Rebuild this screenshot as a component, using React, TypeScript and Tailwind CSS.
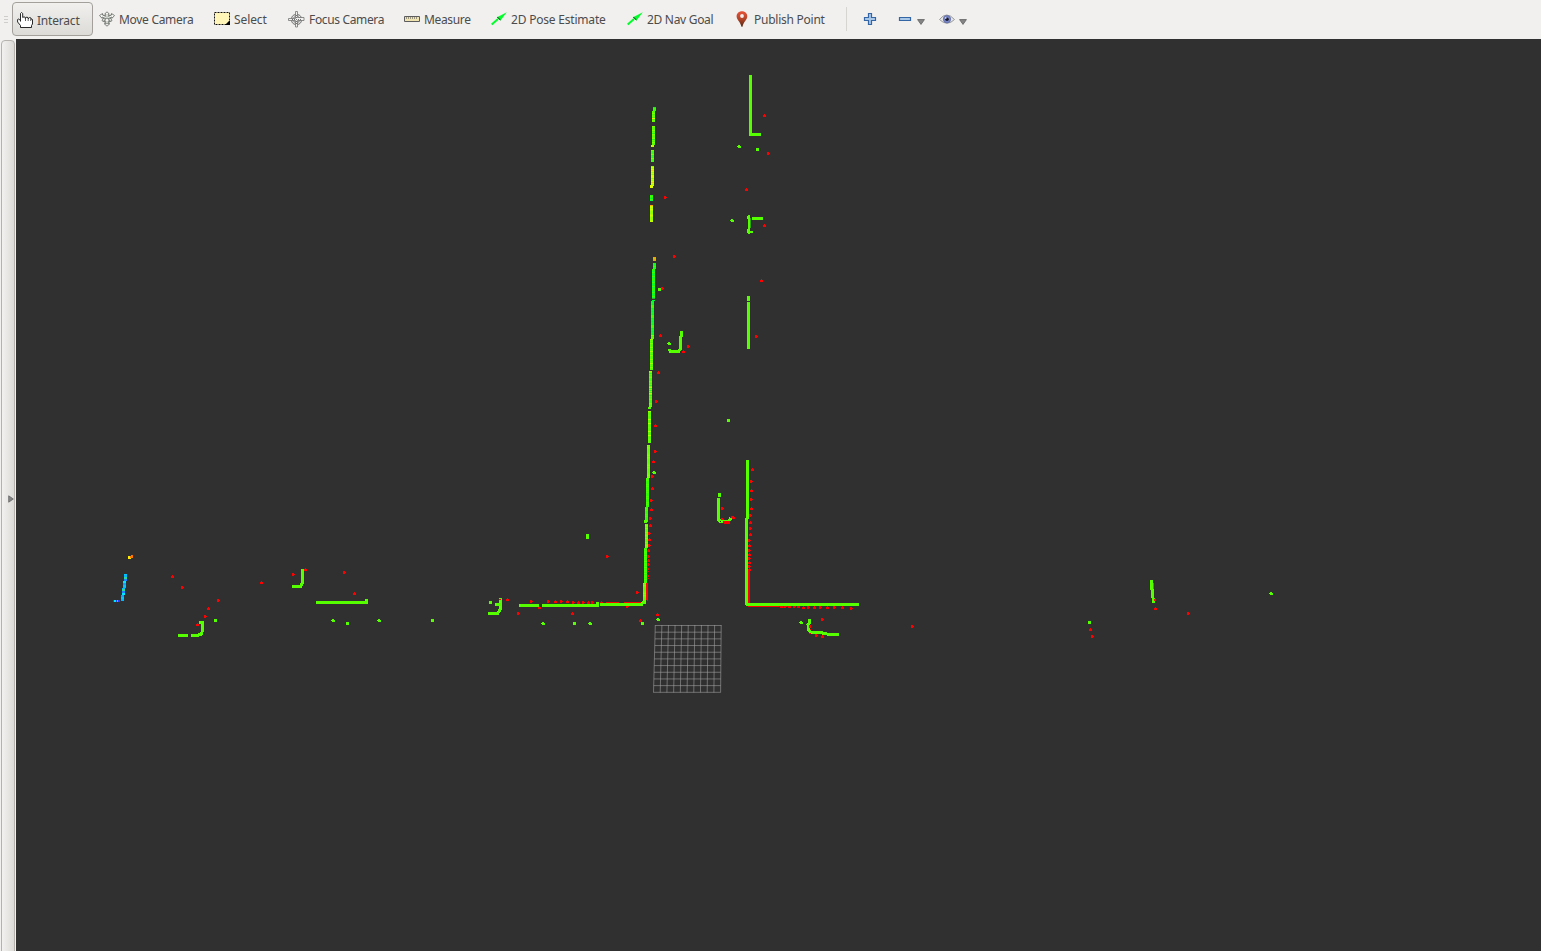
import React from "react";

type Pt = [number, number];

const GREEN = "#55ff00";
const RED = "#ff0000";

const redDots: Pt[] = [
  [764, 115], [768, 153], [746, 189], [665, 197], [764, 225], [674, 256], [761, 280], [662, 288],
  [660, 335], [688, 346], [683, 351], [756, 336], [658, 372], [656, 401], [655, 425], [655, 451],
  [653, 461], [652, 476], [652, 488], [651, 500], [651, 509], [650, 518], [650, 525], [649, 533],
  [649, 539], [649, 545], [648, 550], [648, 556], [648, 560], [648, 564], [647, 568], [647, 571],
  [647, 575], [647, 578], [752, 469], [751, 481], [751, 490], [751, 499], [751, 508], [750, 515],
  [750, 522], [750, 528], [750, 534], [749, 540], [749, 545], [749, 550], [749, 554], [749, 558],
  [749, 562], [749, 566], [749, 569], [637, 592], [657, 614], [722, 508], [733, 517],
  [722, 519], [172, 576], [182, 587], [261, 582], [218, 600], [208, 608], [205, 616], [197, 624],
  [293, 574], [305, 569], [344, 572], [354, 593], [607, 556], [507, 599], [531, 601], [539, 607],
  [518, 613], [572, 613], [548, 601], [555, 601], [561, 601], [567, 601], [573, 602], [578, 602],
  [583, 602], [588, 602], [592, 602], [601, 602], [627, 606], [803, 607], [808, 607], [814, 607],
  [820, 607], [827, 607], [834, 607], [842, 607], [851, 608], [798, 606], [794, 606], [789, 606],
  [785, 606], [781, 606], [822, 619], [809, 626], [816, 635], [822, 636], [912, 626],
  [1155, 608], [1188, 613], [1090, 629], [1092, 636], [640, 620],
];

const greenDots: Pt[] = [
  [739, 146], [757, 149], [732, 220], [659, 289], [669, 343], [728, 420], [654, 472], [642, 623],
  [658, 619], [215, 620], [333, 620], [347, 623], [379, 620], [432, 620], [543, 623], [574, 623],
  [590, 623], [490, 602], [801, 622], [1089, 622], [1271, 593],
];

const greenPaths = [
  "M750.5 75V134.5H761", "M752 218.5H763",
  "M748.5 296V300.5", "M748.5 302V349", "M681.5 331V335L680.5 338V349L678.5 351.5H670.5L669 349",
  "M719.5 493V497", "M719 498L718 512V519L720.5 521.5H728L731 518",
  "M747.5 460V518.5", "M746.5 518V605M746 604.5H859",
  "M302.5 569V583L300.5 586.5H292", "M316 602.5H366.5V599",
  "M178 635.5H188", "M191 635.5H197L201.5 634L202.5 630V622.5L199 622",
  "M500.5 598V609L497.5 613.5H488", "M495 604H502",
  "M519 605.5H539", "M541.5 605.5H598.5M597.5 602V605M600 604.5H641.5L643 602H646",
  "M587 534V539", "M1151.5 580V586L1152.5 593L1153.5 603",
  "M809.5 619V623L808 625V630L811 632L820 632.5L827 634H839",
];

interface Wall { y0: number; y1: number; x0: number; x1: number; tone: string[] }

const mix = ["#70ff00", "#58ff00", "#80ff00", "#48ff00", "#a0ff00", "#66ff00"];
const cool = ["#00ff20", "#18ff08", "#28ff00", "#00ff38", "#40ff00"];
const hot = ["#c8ff00", "#e0d800", "#a0ff00", "#ffa000", "#d8ff00", "#90ff00"];
const lime = ["#66ff00", "#70ff00", "#5cff00", "#80ff00", "#60ff00"];

const walls: Wall[] = [
  { y0: 107, y1: 111, x0: 653, x1: 653, tone: ["#22e818", "#30ff00"] },
  { y0: 111, y1: 122, x0: 652, x1: 652, tone: mix.concat("#e0f000") },
  { y0: 126, y1: 145, x0: 652.4, x1: 652, tone: mix.concat("#d8f000", "#20ff10") },
  { y0: 145, y1: 147, x0: 651, x1: 651, tone: ["#bbff00"] },
  { y0: 150, y1: 162, x0: 651, x1: 651, tone: ["#78ff00", "#20ff20", "#90ff00", "#38ff10"] },
  { y0: 166, y1: 186, x0: 651, x1: 651, tone: hot },
  { y0: 185, y1: 188, x0: 650, x1: 650, tone: ["#ddff00"] },
  { y0: 195, y1: 201, x0: 650, x1: 650, tone: cool },
  { y0: 205, y1: 208, x0: 650, x1: 650, tone: ["#ffaa00", "#c8ff00"] },
  { y0: 208, y1: 222, x0: 650, x1: 650, tone: ["#b0ff00", "#c8ff00", "#98ff00"] },
  { y0: 257, y1: 261, x0: 653, x1: 653, tone: ["#d0b010", "#ff9900", "#b0d000"] },
  { y0: 263, y1: 298, x0: 652.6, x1: 652, tone: cool },
  { y0: 298, y1: 299, x0: 652, x1: 652, tone: ["#38b018"] },
  { y0: 300, y1: 335, x0: 651.5, x1: 651, tone: cool },
  { y0: 335, y1: 370, x0: 650.6, x1: 649.5, tone: mix },
  { y0: 371, y1: 407, x0: 649.4, x1: 648.6, tone: mix.concat(cool) },
  { y0: 407, y1: 409, x0: 648, x1: 648, tone: ["#55ff00"] },
  { y0: 411, y1: 443, x0: 648, x1: 648, tone: lime.concat("#b0ff00") },
  { y0: 445, y1: 478, x0: 647.4, x1: 647, tone: lime },
  { y0: 478, y1: 522, x0: 646.4, x1: 645, tone: ["#30ff00", "#48ff00", "#38ff00"] },
  { y0: 520, y1: 523, x0: 644, x1: 644, tone: ["#55ff00"] },
  { y0: 524, y1: 548, x0: 645, x1: 644.5, tone: lime },
  { y0: 548, y1: 583, x0: 644.4, x1: 643.6, tone: ["#40ff00", "#30ff00", "#50ff00"] },
  { y0: 583, y1: 602, x0: 643.4, x1: 643, tone: lime },
];

const wallCells = walls.flatMap((w, k) =>
  Array.from({ length: w.y1 - w.y0 }, (_, i) => {
    const x = Math.round(w.x0 + ((w.x1 - w.x0) * i) / (w.y1 - w.y0));
    return { x, y: w.y0 + i, c: w.tone[(i * 7 + ((i * i) >> 2) + k) % w.tone.length] };
  })
);

const blues = ["#00c8ff", "#10a0ff", "#00eaff", "#2080ff", "#30d8a0", "#00b4ff"];
const gridSteps = Array.from({ length: 11 }, (_, i) => i);

function LaserScan() {
  return (
    <svg className="block h-full w-full" viewBox="16 39 1525 912" preserveAspectRatio="xMinYMin slice">
      <g stroke="#a0a0a0" strokeOpacity="0.58" strokeWidth="1">
        {gridSteps.map((i) => (
          <g key={i}>
            <line x1={655.3 + i * 6.59} y1="625" x2={653.5 + i * 6.71} y2="692.5" />
            <line x1={655.3 - i * 0.18} y1={625.5 + i * 6.68} x2={721.3 - i * 0.07} y2={625.5 + i * 6.68} />
          </g>
        ))}
      </g>
      <g shapeRendering="crispEdges">
        <path d="M749 606H779M749 570V605M646.5 583V600M724 522.5H730M606 603H619M624 603H641M809.5 629V634" fill="none" stroke={RED} strokeWidth="2" />
        {redDots.map(([x, y], i) => (
          <path key={i} fill={RED} d={i % 2 ? `M${x - 1} ${y - 1}h2v1h1v1h-1v1h-2z` : `M${x} ${y - 1}h1v1h1v2h-3v-2h1z`} />
        ))}
        <path d={greenPaths.join("")} fill="none" stroke={GREEN} strokeWidth="3" />
        <path fill={GREEN} d="M748 215h2v16h3v2h-3v1h-2v-1h-1v-4h1v-10h-1v-3h1z" />
        <path d="M750.5 218V228M1153.5 583V589" fill="none" stroke="#2fa814" strokeWidth="1" />
        {wallCells.map((c, i) => (
          <rect key={i} x={c.x} y={c.y} width="3" height="1" fill={c.c} />
        ))}
        {greenDots.map(([x, y], i) => (
          <path key={i} fill={GREEN} d={i % 2 ? `M${x - 1} ${y - 1}h3v3h-3z` : `M${x - 1} ${y - 1}h2v1h1v2h-3v-1h-1v-1h1z`} />
        ))}
        <path d="M723 521h7v2h-7zM731 516h2v2h-2zM1154 599h2v2h-2zM809 625h2v3h-2zM499 599h2v1h-2zM606 602h12v1h-12zM624 602h16v1h-16z" fill={RED} />
        <path d="M647 583h1v18h-1zM748 570h2v33h-2zM748 606h30v1h-30z" fill={RED} />
        {Array.from({ length: 27 }, (_, i) => (
          <rect key={i} x={Math.round(124.4 - i * 0.14)} y={574 + i} width="3" height="1" fill={blues[(i * 5 + (i >> 1)) % 6]} />
        ))}
        <path fill="#2040ff" d="M113 600h7v2h-7z" />
        <path fill="#00eaff" d="M114 600h2v2h-2zM117 600h1v2h-1z" />
        <path fill="#ffee00" d="M128 556h3v3h-3z" />
        <path fill="#ff7800" d="M130 556h1v-1h2v3h-3z" />
      </g>
    </svg>
  );
}

const HandIcon = () => (
  <svg className="h-4 w-4" viewBox="0 0 16 16">
    <path d="M3.5 9.5V1.5L4.5.5L5.7 1.5V5.5L7 4.8L8.4 5.5V6.5L9.6 5L11.2 5.7V6.8L12.5 5.6L14 6V7L15.5 7.5V12L14.5 13.5V15.5H3.5V13.5L.6 10V7.5L1.8 7L3.5 8.7" fill="#fff" stroke="#111" strokeWidth=".9" strokeLinejoin="round" />
    <path d="M8.5 6v3M11.2 6.5v2.5M13.7 7v2" stroke="#333" strokeWidth=".8" fill="none" />
  </svg>
);

const MoveIcon = () => (
  <svg className="h-4 w-4" viewBox="0 0 16 16" fill="none" stroke="#70756f" strokeWidth="1">
    <path d="M8 .8L10.3 3H9.2V4.7Q11.2 4.7 12.5 4V2.5L15.5 4.5L13 7.3V6Q11 7.2 9.4 7.3V8.5L11.4 7.5V6.7L13 9.8L10 10.5L10.6 9.3L9.2 10V12.7H10.8L8 15.2L5.2 12.7H6.8V10L5.4 9.3L6 10.5L3 9.8L4.6 6.7V7.5L6.6 8.5V7.3Q5 7.2 3 6V7.3L.5 4.5L3.5 2.5V4Q4.8 4.7 6.8 4.7V3H5.7Z" fill="#f6f6f4" strokeWidth=".9" />
    <path d="M3.5 3.5L7 6H9L12.5 3.5M4 10L8 13L12 10M6.5 7.5h3" strokeWidth=".7" />
  </svg>
);

const SelectIcon = () => (
  <svg className="h-4 w-4" viewBox="0 0 16 16">
    <path d="M.5 1.5h15v12H.5z" fill="#fff5b8" stroke="#111" strokeDasharray="2 1" />
    <path d="M16 10v4h-4v-1l3-3z" fill="#000" />
  </svg>
);

const FocusIcon = () => (
  <svg className="h-[17px] w-[17px]" viewBox="0 0 17 17" fill="none" stroke="#747474" strokeWidth="1">
    <circle cx="8.5" cy="8.5" r="5.3" />
    <circle cx="8.5" cy="8.5" r="3" strokeWidth=".8" />
    <path d="M7.5.5h2v6h6.5v3H9.5V16h-2V9.5H.5v-2h7z" fill="#f1f0ee" strokeWidth=".8" />
    <path d="M4 8.5h9M8.5 4v9" strokeDasharray="1 1" />
    <circle cx="8.5" cy="8.5" r="4" strokeDasharray="1 1" />
  </svg>
);

const RulerIcon = () => (
  <svg className="h-4 w-4" viewBox="0 0 16 16">
    <path d="M.5 5.5h15v5H.5z" fill="#efe3b0" stroke="#5c5c5c" />
    <path d="M2.5 6v2M4.5 6v2M6.5 6v2M8.5 6v2M10.5 6v2M12.5 6v2" stroke="#9b947c" />
  </svg>
);

const ArrowIcon = () => (
  <svg className="h-4 w-4" viewBox="0 0 16 16">
    <path d="M.7 13.5L7 8" stroke="#00ff2a" strokeWidth="2" />
    <path d="M6 6.2L15.8 1.2L9.5 9.4Z" fill="#00ff2a" />
    <path d="M6 6.2L9.3 9.2L8 7Z" fill="#146b20" stroke="#146b20" strokeWidth=".6" />
  </svg>
);

const PinIcon = () => (
  <svg className="h-4 w-3" viewBox="0 0 12 16">
    <defs>
      <linearGradient id="pin" x2="0" y2="1">
        <stop stopColor="#e65339" /><stop offset=".5" stopColor="#b34429" /><stop offset="1" stopColor="#502713" />
      </linearGradient>
    </defs>
    <path d="M6 .3C2.8.3.6 2.4.6 5.4C.6 8.5 4.3 10.5 5.5 15.8H6.5C7.5 10.5 11.3 8.5 11.3 5.4C11.3 2.4 9.1.3 6 .3Z" fill="url(#pin)" />
    <circle cx="6" cy="5" r="1.9" fill="#f4eeee" />
  </svg>
);

const Caret = () => (
  <svg className="mt-[6px] h-[6px] w-2" viewBox="0 0 8 6">
    <path d="M.6.6h6.8L4 5.4z" fill="#858585" stroke="#666" strokeWidth=".9" />
  </svg>
);

interface ToolProps { label: string; icon: React.ReactNode; box: string; text: string }

function Tool({ label, icon, box, text }: ToolProps) {
  return (
    <button className={"flex h-8 shrink-0 items-center gap-1 " + box}>
      {icon}
      <span className={"whitespace-nowrap pt-[2px] text-left leading-4 " + text}>{label}</span>
    </button>
  );
}

export default function App() {
  return (
    <div className="flex h-screen w-full flex-col overflow-hidden bg-[#f1f0ee] font-['Noto_Sans','Open_Sans',sans-serif] text-[12px] text-[#4c4c4c]">
      <header className="flex h-[39px] shrink-0 items-start pt-[3px]">
        <div className="mt-[13px] ml-1 flex w-2 flex-col gap-[2px]">
          <i className="h-px w-1 bg-[#cfcdca]" />
          <i className="h-px w-1 bg-[#cfcdca]" />
          <i className="h-px w-1 bg-[#cfcdca]" />
        </div>
        <button className="-mt-px flex h-[34px] w-[81px] shrink-0 items-center gap-1 rounded-[4px] border border-[#a3a09b] bg-linear-to-b from-[#f1f0ee] to-[#dddbd8] pt-[2px] pl-1">
          <HandIcon />
          <span className="pt-px leading-4 tracking-[-0.2px]">Interact</span>
        </button>
        <Tool label="Move Camera" icon={<MoveIcon />} box="ml-[6px] w-[115px]" text="tracking-[-0.3px]" />
        <Tool label="Select" icon={<SelectIcon />} box="w-[74px]" text="tracking-[-0.1px]" />
        <Tool label="Focus Camera" icon={<FocusIcon />} box="w-[116px]" text="tracking-[-0.35px]" />
        <Tool label="Measure" icon={<RulerIcon />} box="w-[87px]" text="tracking-[-0.35px]" />
        <Tool label="2D Pose Estimate" icon={<ArrowIcon />} box="w-[136px]" text="tracking-[-0.2px]" />
        <Tool label="2D Nav Goal" icon={<ArrowIcon />} box="w-[109px]" text="tracking-[-0.3px]" />
        <Tool label="Publish Point" icon={<PinIcon />} box="w-[110px] gap-[6px]" text="tracking-[-0.25px]" />
        <div className="mt-1 h-6 w-px bg-[#d7d5d2]" />
        <button className="ml-4 flex h-8 w-[35px] shrink-0 items-center">
          <svg className="h-[14px] w-[14px]" viewBox="0 0 14 14">
            <path d="M5.5 1.5h3v4h4v3h-4v4h-3v-4h-4v-3h4z" fill="#a9c8e8" stroke="#3465a4" strokeWidth="1.2" />
          </svg>
        </button>
        <button className="flex h-8 w-[41px] shrink-0 items-center gap-[5px]">
          <svg className="h-[14px] w-[14px]" viewBox="0 0 14 14">
            <path d="M1.5 5.5h11v3h-11z" fill="#a9c8e8" stroke="#3465a4" strokeWidth="1.2" />
          </svg>
          <Caret />
        </button>
        <button className="flex h-8 shrink-0 items-center gap-1">
          <svg className="h-4 w-4" viewBox="0 0 16 16">
            <path d="M.5 8.5Q7.5-.5 15.5 8.5Q8 16 .5 8.5Z" fill="#e9e9e9" stroke="#999" />
            <circle cx="8" cy="8.2" r="3.7" fill="#7785c5" stroke="#5966a0" strokeWidth=".7" />
            <circle cx="8" cy="8.2" r="1.8" fill="#17182c" />
            <circle cx="6.8" cy="7" r=".8" fill="#fff" />
          </svg>
          <Caret />
        </button>
      </header>
      <div className="flex min-h-0 flex-1">
        <aside className="flex w-4 shrink-0 pt-px pl-px">
          <button className="flex h-[940px] w-[14px] items-start justify-center rounded-[4px] border border-[#b5b2ae] bg-linear-to-r from-[#f2f1ef] to-[#dddbd8] pt-[454px] pl-[5px]">
            <svg className="h-2 w-[6px] shrink-0" viewBox="0 0 6 8">
              <path d="M.7.8L5.3 4L.7 7.2Z" fill="#858585" stroke="#666" strokeWidth=".8" />
            </svg>
          </button>
        </aside>
        <main className="min-w-0 flex-1 bg-[#303030]">
          <LaserScan />
        </main>
      </div>
    </div>
  );
}
